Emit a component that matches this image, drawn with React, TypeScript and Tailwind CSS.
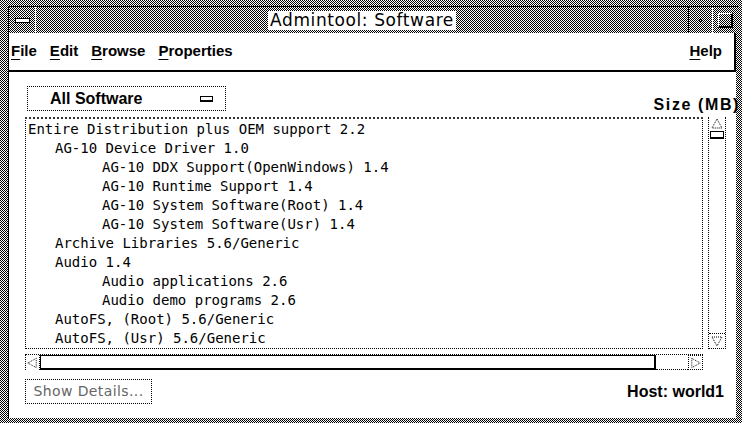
import React from "react";

const rows: [number, string][] = [
  [0, "Entire Distribution plus OEM support 2.2"],
  [1, "AG-10 Device Driver 1.0"],
  [2, "AG-10 DDX Support(OpenWindows) 1.4"],
  [2, "AG-10 Runtime Support 1.4"],
  [2, "AG-10 System Software(Root) 1.4"],
  [2, "AG-10 System Software(Usr) 1.4"],
  [1, "Archive Libraries 5.6/Generic"],
  [1, "Audio 1.4"],
  [2, "Audio applications 2.6"],
  [2, "Audio demo programs 2.6"],
  [1, "AutoFS, (Root) 5.6/Generic"],
  [1, "AutoFS, (Usr) 5.6/Generic"],
];

const indent = ["pl-[2px]", "pl-[29px]", "pl-[76px]"];

function Mnemonic({ label }: { label: string }) {
  return (
    <span>
      <span className="underline underline-offset-[3px] decoration-[1px]">{label[0]}</span>
      {label.slice(1)}
    </span>
  );
}

function Arrow({ dir }: { dir: "up" | "down" | "left" | "right" }) {
  const pts = {
    up: "7,2 12,11 2,11",
    down: "2,3 12,3 7,12",
    left: "2,7 11,2 11,12",
    right: "3,2 12,7 3,12",
  }[dir];
  return (
    <svg width="14" height="14" viewBox="0 0 14 14" className="block">
      <polygon points={pts} fill="none" stroke="#000" strokeWidth="1" strokeDasharray="1 1" />
    </svg>
  );
}

function TitleBar() {
  return (
    <div className="ml-[8px] mr-[4px] h-[27px] flex border-t border-l border-black">
      <div className="w-[27px] h-full border-r border-white flex items-center justify-center">
        <div className="w-[15px] h-[5px] bg-white border border-black" />
      </div>
      <div className="flex-1 flex items-center justify-center">
        <span className="bg-white px-[2px] h-[19px] leading-[19px] text-[17px] tracking-[0.6px] text-black font-['DejaVu_Sans',sans-serif]">
          Admintool: Software
        </span>
      </div>
      <div className="w-[25px] h-full border-l border-black border-r border-r-white flex items-center justify-center">
        <div className="w-[3px] h-[3px] bg-white border border-black" />
      </div>
      <div className="w-[25px] h-full flex items-center justify-center">
        <div className="w-[15px] h-[15px] border-t border-l border-white border-b-2 border-r-2 border-b-black border-r-black" />
      </div>
    </div>
  );
}

function MenuBar() {
  return (
    <div className="h-[39px] shrink-0 flex items-center pl-[2px] pr-[12px] border-b-2 border-r-2 border-black text-[15px] font-bold font-['Liberation_Sans',Arial,sans-serif]">
      <div className="flex gap-[13px]">
        <Mnemonic label="File" />
        <Mnemonic label="Edit" />
        <Mnemonic label="Browse" />
        <Mnemonic label="Properties" />
      </div>
      <div className="ml-auto">
        <Mnemonic label="Help" />
      </div>
    </div>
  );
}

function SoftwareList() {
  return (
    <div className="flex gap-[5px] mt-[6px] ml-[16px]">
      <div className="w-[678px] h-[232px] overflow-hidden border-t-2 border-l border-t-[#333] border-l-black border-r border-b border-dotted border-r-black border-b-black">
        <div className="pt-[1px] font-['DejaVu_Sans_Mono',monospace] text-[14px] leading-[19px] text-black whitespace-pre">
          {rows.map(([lvl, txt], i) => (
            <div key={i} className={indent[lvl]}>
              {txt}
            </div>
          ))}
        </div>
      </div>
      <div className="w-[18px] h-[232px] flex flex-col border-l border-black border-r border-dotted border-r-black border-b border-b-black">
        <div className="h-[14px] flex items-center justify-center">
          <Arrow dir="up" />
        </div>
        <div className="h-[8px] mx-[1px] border border-dotted border-black border-b-black border-b-2 border-solid" />
        <div className="flex-1" />
        <div className="h-[15px] border-t border-dotted border-black flex items-center justify-center">
          <Arrow dir="down" />
        </div>
      </div>
    </div>
  );
}

function HScroll() {
  return (
    <div className="mt-[5px] ml-[16px] w-[678px] h-[16px] flex border-t border-dotted border-black">
      <div className="w-[15px] border-l border-r border-dotted border-black flex items-center justify-center">
        <Arrow dir="left" />
      </div>
      <div className="flex-1 border-2 border-black border-t border-l" />
      <div className="w-[32px] border-b border-dotted border-black" />
      <div className="w-[15px] border border-dotted border-black flex items-center justify-center">
        <Arrow dir="right" />
      </div>
    </div>
  );
}

export default function App() {
  // frame stipple: vertical and horizontal 1px stripes, differenced into a checkerboard
  return (
    <div className="w-[742px] h-[423px] overflow-hidden flex flex-col bg-black bg-blend-difference bg-[repeating-linear-gradient(90deg,#000_0px,#000_1px,#fff_1px,#fff_2px),repeating-linear-gradient(0deg,#000_0px,#000_1px,#fff_1px,#fff_2px)]">
      <div className="h-[6px] shrink-0" />
      <TitleBar />
      <div className="flex-1 ml-[8px] mr-[6px] mb-[5px] bg-white border-l border-black flex flex-col">
        <MenuBar />
        <div className="flex-1 flex flex-col font-['Liberation_Sans',Arial,sans-serif] text-black">
          <div className="mt-[14px] flex items-end">
            <div className="ml-[18px] w-[199px] h-[25px] flex items-center border border-dotted border-black border-r-black border-b-black">
              <span className="ml-[22px] text-[16px] font-bold">All Software</span>
              <span className="ml-auto mr-[12px] w-[13px] h-[6px] border border-black border-b-2" />
            </div>
            <span className="ml-auto mr-[-4px] text-[16px] tracking-[1.6px] font-bold leading-none mb-[-2px]">Size (MB)</span>
          </div>
          <SoftwareList />
          <HScroll />
          <div className="mt-[9px] flex items-center">
            <div className="ml-[16px] w-[127px] h-[25px] border border-dotted border-black flex items-center justify-center text-[14px] tracking-[0.4px] text-[#666] font-['DejaVu_Sans',sans-serif]">
              Show Details...
            </div>
            <span className="ml-auto mr-[12px] text-[16px] font-bold">Host: world1</span>
          </div>
        </div>
      </div>
    </div>
  );
}
